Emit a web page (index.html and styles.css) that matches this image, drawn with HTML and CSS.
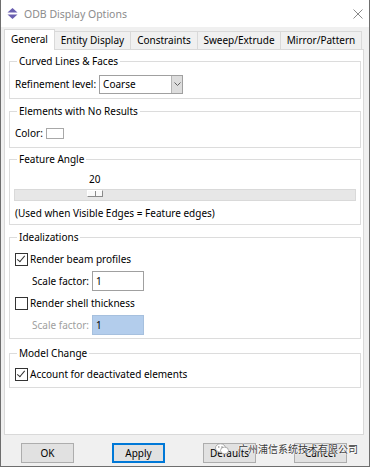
FILE: index.html
```html
<!DOCTYPE html>
<html lang="en">
  <head>
    <meta charset="UTF-8" />
    <title>ODB Display Options</title>
    <link rel="stylesheet" href="styles.css">
  </head>
  <body>
    <div class="window">
      <div class="titlebar">
        <svg class="app-icon" width="11" height="11" viewBox="0 0 11 11">
          <path d="M5.5 0 L10.5 4.5 L0.5 4.5 Z" fill="#6a5fb0" />
          <path d="M5.5 11 L10.5 6.5 L0.5 6.5 Z" fill="#6a5fb0" />
        </svg>
        <span class="title">ODB Display Options</span>
        <svg class="close" width="10" height="10" viewBox="0 0 10 10">
          <path d="M0.5 0.5 L9.5 9.5 M9.5 0.5 L0.5 9.5" stroke="#8a8a8a" stroke-width="1" />
        </svg>
      </div>

      <div class="tabs">
        <div class="tab active">General</div>
        <div class="tab">Entity Display</div>
        <div class="tab">Constraints</div>
        <div class="tab">Sweep/Extrude</div>
        <div class="tab">Mirror/Pattern</div>
      </div>

      <div class="panel">
        <fieldset class="group g-curved">
          <legend>Curved Lines &amp; Faces</legend>
          <div class="row">
            <span>Refinement level:</span>
            <div class="combo">
              <span class="combo-text">Coarse</span>
              <span class="combo-btn">
                <svg width="7" height="4" viewBox="0 0 7 4">
                  <path d="M0.5 0.5 L3.5 3.5 L6.5 0.5" stroke="#606060" fill="none" />
                </svg>
              </span>
            </div>
          </div>
        </fieldset>

        <fieldset class="group g-noresult">
          <legend>Elements with No Results</legend>
          <div class="row">
            <span>Color:</span>
            <span class="swatch"></span>
          </div>
        </fieldset>

        <fieldset class="group g-angle">
          <legend>Feature Angle</legend>
          <div class="slider-value">20</div>
          <div class="slider">
            <span class="thumb"></span>
          </div>
          <div class="note">(Used when Visible Edges = Feature edges)</div>
        </fieldset>

        <fieldset class="group g-ideal">
          <legend>Idealizations</legend>
          <div class="check-row">
            <span class="checkbox checked"></span>
            <span>Render beam profiles</span>
          </div>
          <div class="row indent">
            <span>Scale factor:</span>
            <span class="field">1</span>
          </div>
          <div class="check-row">
            <span class="checkbox"></span>
            <span>Render shell thickness</span>
          </div>
          <div class="row indent disabled">
            <span>Scale factor:</span>
            <span class="field selected">1</span>
          </div>
        </fieldset>

        <fieldset class="group g-model">
          <legend>Model Change</legend>
          <div class="check-row">
            <span class="checkbox checked"></span>
            <span>Account for deactivated elements</span>
          </div>
        </fieldset>
      </div>

      <div class="buttons">
        <button class="btn">OK</button>
        <button class="btn focused">Apply</button>
        <button class="btn">Defaults</button>
        <button class="btn">Cancel</button>
      </div>

      <!-- watermark over the bottom right -->
      <div class="watermark">
        <svg width="14" height="12" viewBox="0 0 14 12">
          <ellipse cx="5.5" cy="5" rx="5" ry="4.2" fill="#fff" stroke="#9a9a9a" stroke-width="0.8" />
          <ellipse cx="9.5" cy="7.5" rx="4" ry="3.4" fill="#fff" stroke="#9a9a9a" stroke-width="0.8" />
          <circle cx="3.8" cy="4" r="0.7" fill="#777" />
          <circle cx="7" cy="4" r="0.7" fill="#777" />
        </svg>
        <span>广州浦信系统技术有限公司</span>
      </div>
    </div>
  </body>
</html>
```

FILE: styles.css
```css
html,
body {
  margin: 0;
  padding: 0;
}

body {
  width: 370px;
  height: 467px;
  font-family: "Noto Sans", "Noto Sans CJK SC", sans-serif;
  font-size: 10px;
  line-height: 16px;
  color: #000000;
}

.window {
  position: relative;
  box-sizing: border-box;
  width: 370px;
  height: 467px;
  border: 1px solid #6e6e6e;
  border-top: none;
  background-color: #f0f0f0;
  display: flex;
  flex-direction: column;
}

.titlebar {
  height: 27px;
  flex: none;
  background: #ffffff;
  display: flex;
  align-items: center;
  padding: 0 6px 0 6px;
}

.app-icon {
  margin-right: 6px;
}

.title {
  color: #8c8c8c;
  flex: 1;
  font-size: 10.5px;
}

.tabs {
  display: flex;
  align-items: flex-end;
  height: 22px;
  flex: none;
  padding: 0 0 0 3px;
}

.tab {
  height: 18px;
  line-height: 17px;
  text-align: center;
  border: 1px solid #d9d9d9;
  border-bottom: none;
  border-left: none;
  box-sizing: border-box;
  background: #f0f0f0;
  white-space: nowrap;
}

.tab:nth-child(2) {
  width: 76px;
}

.tab:nth-child(3) {
  width: 67px;
}

.tab:nth-child(4) {
  width: 83px;
}

.tab:nth-child(5) {
  width: 81px;
}

.tab.active {
  width: 51px;
  height: 21px;
  line-height: 19px;
  background: #ffffff;
  border-left: 1px solid #d9d9d9;
  margin-bottom: -1px;
  position: relative;
}

.panel {
  background: #ffffff;
  border: 1px solid #d9d9d9;
  margin: 0 5px 0 3px;
  height: 386px;
  flex: none;
  box-sizing: border-box;
  padding: 3px 2px 0 4px;
}

.group {
  border: 1px solid #dcdcdc;
  margin: 0;
  padding: 4px 5px 4px 5px;
}

.group legend {
  padding: 0 2px;
  margin-left: 2px;
  line-height: 16px;
}

.g-curved {
  padding-top: 5px;
  margin-bottom: 4px;
}

.g-noresult {
  margin-bottom: 3px;
}

.g-angle {
  padding-bottom: 3px;
  margin-bottom: 4px;
}

.g-ideal {
  padding-top: 3px;
  padding-bottom: 2px;
  margin-bottom: 6px;
}

.g-model {
  padding-top: 2px;
  padding-bottom: 2px;
}

.row {
  display: flex;
  align-items: center;
  gap: 3px;
  height: 20px;
}

.combo {
  width: 84px;
  height: 19px;
  box-sizing: border-box;
  border: 1px solid #a0a0a0;
  display: flex;
  align-items: center;
}

.combo-text {
  flex: 1;
  padding-left: 3px;
}

.combo-btn {
  width: 11px;
  height: 17px;
  background: #dddddd;
  border-left: 1px solid #b5b5b5;
  box-sizing: border-box;
  display: flex;
  align-items: center;
  justify-content: center;
}

.swatch {
  width: 16px;
  height: 9px;
  border: 1px solid #a8a8a8;
  background: #ffffff;
}

.slider-value {
  padding-left: 74px;
  height: 16px;
}

.slider {
  position: relative;
  height: 10px;
  background: #e7e7e7;
  border: 1px solid #d9d9d9;
  margin: 2px -1px 0 -1px;
}

.thumb {
  position: absolute;
  left: 72px;
  top: 0;
  width: 14px;
  height: 5px;
  background: #f9f9f9;
  border: 1px solid #8a8a8a;
  border-top-color: #ffffff;
  border-left-color: #ffffff;
}

.thumb::after {
  content: "";
  position: absolute;
  left: 7px;
  top: 0;
  width: 1px;
  height: 5px;
  background: #8a8a8a;
}

.note {
  margin-top: 4px;
}

.check-row {
  display: flex;
  align-items: center;
  gap: 2px;
  height: 22px;
}

.checkbox {
  width: 11px;
  height: 11px;
  border: 1px solid #333333;
  position: relative;
  background: #ffffff;
  flex: none;
}

.checkbox.checked::after {
  content: "";
  position: absolute;
  left: 3px;
  top: 0;
  width: 3px;
  height: 7px;
  border-right: 1px solid #333333;
  border-bottom: 1px solid #333333;
  transform: rotate(40deg);
}

.indent {
  padding-left: 17px;
  height: 22px;
}

.field {
  width: 52px;
  height: 20px;
  line-height: 18px;
  box-sizing: border-box;
  border: 1px solid #a0a0a0;
  padding-left: 3px;
}

.disabled {
  color: #a0a0a0;
}

.field.selected {
  background: #b3cdec;
  border-color: #a6c0de;
  color: #000000;
}

.buttons {
  display: flex;
  gap: 38px;
  padding: 8px 0 0 20px;
}

.btn {
  width: 53px;
  height: 20px;
  font-family: inherit;
  font-size: 10px;
  color: #000000;
  background: #e1e1e1;
  border: 1px solid #adadad;
  padding: 0;
}

.btn.focused {
  border: 1px solid #0078d7;
  box-shadow: inset 0 0 0 1px #0078d7;
}

.watermark {
  position: absolute;
  left: 214px;
  top: 441px;
  display: flex;
  align-items: center;
  gap: 9px;
  font-size: 10px;
  color: #3a3a3a;
  text-shadow: 0 0 2px #ffffff, 0 0 2px #ffffff, 0 0 1px #ffffff;
}
```
